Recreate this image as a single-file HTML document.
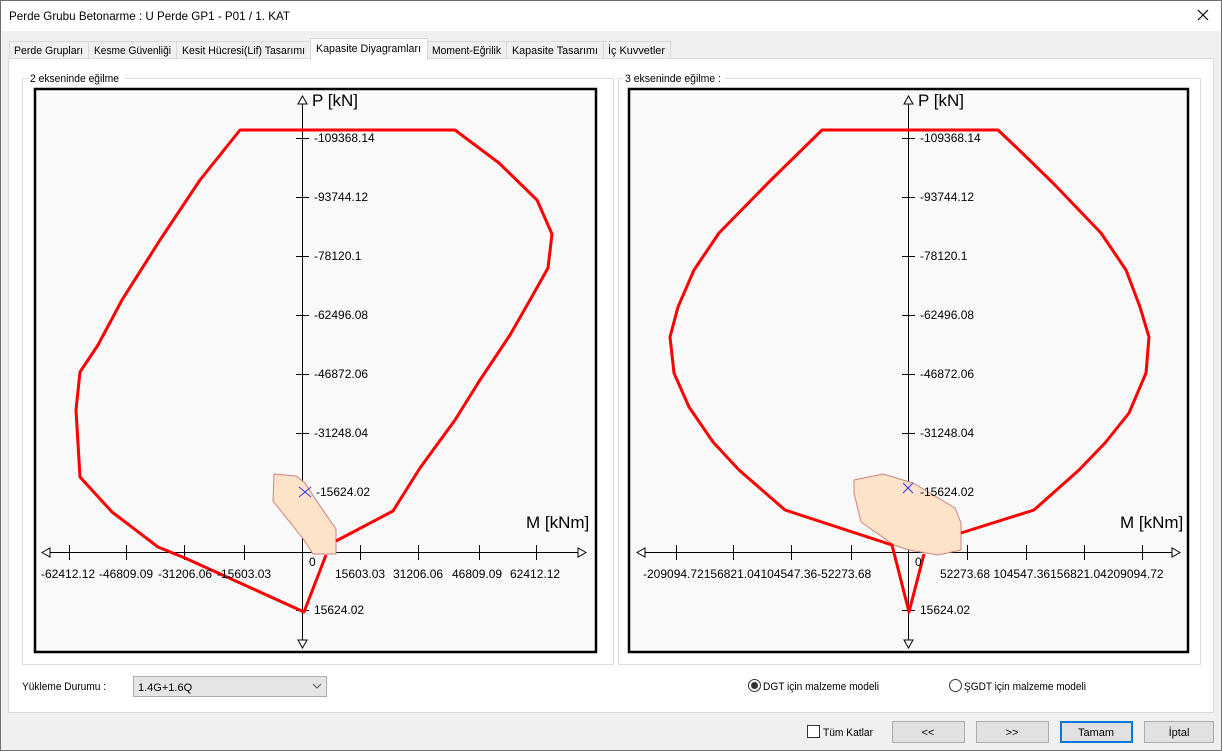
<!DOCTYPE html>
<html><head><meta charset="utf-8"><style>
html,body{margin:0;padding:0;width:1222px;height:751px;overflow:hidden;background:#f0f0f0}
svg{display:block}
text{font-family:"Liberation Sans",sans-serif}
</style></head><body>
<svg width="1222" height="751" viewBox="0 0 1222 751" xmlns="http://www.w3.org/2000/svg">
<rect x="0" y="0" width="1222" height="751" fill="#f0f0f0"/>
<rect x="0" y="0" width="1222" height="31" fill="#fff"/>
<text x="9" y="20" font-size="12" fill="#000" textLength="281" lengthAdjust="spacingAndGlyphs">Perde Grubu Betonarme :  U Perde GP1 - P01 / 1. KAT</text>
<path d="M1198 10 L1208 20 M1208 10 L1198 20" stroke="#000" stroke-width="1.2"/>
<rect x="0.5" y="0.5" width="1221" height="750" fill="none" stroke="#6f6f6f"/>
<!-- tab panel -->
<rect x="8.5" y="58.5" width="1205" height="654" fill="#fff" stroke="#d9d9d9"/>
<g font-size="11" fill="#000" lengthAdjust="spacingAndGlyphs">
<rect x="9.5" y="41.5" width="79" height="17" fill="#f0f0f0" stroke="#d9d9d9"/><text x="14" y="54" textLength="69" lengthAdjust="spacingAndGlyphs">Perde Grupları</text>
<rect x="88.5" y="41.5" width="88" height="17" fill="#f0f0f0" stroke="#d9d9d9"/><text x="94" y="54" textLength="77" lengthAdjust="spacingAndGlyphs">Kesme Güvenliği</text>
<rect x="176.5" y="41.5" width="134" height="17" fill="#f0f0f0" stroke="#d9d9d9"/><text x="182" y="54" textLength="123" lengthAdjust="spacingAndGlyphs">Kesit Hücresi(Lif) Tasarımı</text>
<rect x="310.5" y="38.5" width="117" height="21" fill="#fff" stroke="#d9d9d9"/><rect x="311" y="57" width="116" height="3" fill="#fff"/><text x="316" y="52" textLength="105" lengthAdjust="spacingAndGlyphs">Kapasite Diyagramları</text>
<rect x="427.5" y="41.5" width="79" height="17" fill="#f0f0f0" stroke="#d9d9d9"/><text x="432" y="54" textLength="69" lengthAdjust="spacingAndGlyphs">Moment-Eğrilik</text>
<rect x="506.5" y="41.5" width="97" height="17" fill="#f0f0f0" stroke="#d9d9d9"/><text x="512" y="54" textLength="86" lengthAdjust="spacingAndGlyphs">Kapasite Tasarımı</text>
<rect x="603.5" y="41.5" width="67" height="17" fill="#f0f0f0" stroke="#d9d9d9"/><text x="608" y="54" textLength="57" lengthAdjust="spacingAndGlyphs">İç Kuvvetler</text>
</g>
<!-- group boxes -->
<rect x="22.5" y="78.5" width="591" height="586" fill="none" stroke="#dcdcdc"/>
<rect x="28" y="72" width="96" height="12" fill="#fff"/>
<text x="30" y="82" font-size="11" textLength="89" lengthAdjust="spacingAndGlyphs">2 ekseninde eğilme</text>
<rect x="618.5" y="78.5" width="582" height="586" fill="none" stroke="#dcdcdc"/>
<rect x="623" y="72" width="102" height="12" fill="#fff"/>
<text x="625" y="82" font-size="11" textLength="96" lengthAdjust="spacingAndGlyphs">3 ekseninde eğilme :</text>

<!-- LEFT PLOT -->
<rect x="35" y="89" width="561" height="563" fill="#f9f9f9" stroke="#000" stroke-width="2.5"/>
<g stroke="#000" stroke-width="1" fill="none">
<line x1="302.5" y1="104" x2="302.5" y2="640"/>
<line x1="50" y1="552.5" x2="578" y2="552.5"/>
<path d="M302.5 96 L298 104 L307 104 Z M302.5 648 L298 640 L307 640 Z M42 552.5 L50 548 L50 557 Z M586 552.5 L578 548 L578 557 Z" fill="#fff"/>
<path d="M69.5 545V560M126.5 545V560M184.5 545V560M244.5 545V560M360.5 545V560M418.5 545V560M479.5 545V560M536.5 545V560"/>
<path d="M296 138.5H309M296 197.5H309M296 256.5H309M296 315.5H309M296 374.5H309M296 433.5H309M296 492.5H309M296 610.5H309"/>
</g>
<polygon points="274,474 296,476 305,483 316,500 336,529 336,554 313,554 304,540 273,501" fill="#fde3c8" stroke="#d08080" stroke-width="1"/>
<path d="M299 487 L311 497 M299 497 L311 487" stroke="#3030ff" stroke-width="1"/>
<polyline fill="none" stroke="#f00" stroke-width="3" stroke-linejoin="round" points="336,541 393,511 420,468 455,420 480,380 510,335 530,300 548,268 552,234 537,200 499,163 455,130 240,130 200,180 160,240 122,300 98,345 80,372 76,410 80,477 112,512 158,547 185,558 304,612 326,555"/>
<g font-size="12" fill="#000">
<text x="314" y="142">-109368.14</text><text x="314" y="201">-93744.12</text><text x="314" y="260">-78120.1</text><text x="314" y="319">-62496.08</text><text x="314" y="378">-46872.06</text><text x="314" y="437">-31248.04</text><text x="316" y="496">-15624.02</text><text x="314" y="614">15624.02</text>
<text x="309" y="566">0</text>
<text x="41" y="578">-62412.12</text><text x="99" y="578">-46809.09</text><text x="158" y="578">-31206.06</text><text x="217" y="578">-15603.03</text>
<text x="335" y="578">15603.03</text><text x="393" y="578">31206.06</text><text x="452" y="578">46809.09</text><text x="510" y="578">62412.12</text>
<text x="312" y="106" font-size="17">P [kN]</text>
<text x="526" y="528" font-size="17">M [kNm]</text>
</g>

<!-- RIGHT PLOT -->
<rect x="629" y="89" width="559" height="563" fill="#f9f9f9" stroke="#000" stroke-width="2.5"/>
<g stroke="#000" stroke-width="1" fill="none">
<line x1="908.5" y1="104" x2="908.5" y2="640"/>
<line x1="645" y1="552.5" x2="1172" y2="552.5"/>
<path d="M908.5 96 L904 104 L913 104 Z M908.5 648 L904 640 L913 640 Z M637 552.5 L645 548 L645 557 Z M1180 552.5 L1172 548 L1172 557 Z" fill="#fff"/>
<path d="M676.5 545V560M733.5 545V560M791.5 545V560M851.5 545V560M967.5 545V560M1026.5 545V560M1084.5 545V560M1142.5 545V560"/>
<path d="M902 138.5H915M902 197.5H915M902 256.5H915M902 315.5H915M902 374.5H915M902 433.5H915M902 492.5H915M902 610.5H915"/>
</g>
<polygon points="854,480 883,474 913,483 955,508 961,523 961,550 938,555 909,550 894,545 861,522 854,493" fill="#fde3c8" stroke="#d08080" stroke-width="1"/>
<path d="M903 483 L913 493 M903 493 L913 483" stroke="#3030ff" stroke-width="1"/>
<polyline fill="none" stroke="#f00" stroke-width="3" stroke-linejoin="round" points="961,533 1034,510 1079,470 1105,443 1129,413 1146,373 1149,337 1140,307 1126,270 1101,233 1053,183 1016,147 998,130 822,130 769,182 719,233 694,270 678,307 670,337 674,373 689,407 713,442 739,470 785,510 892,545 909,612 924,554"/>
<g font-size="12" fill="#000">
<text x="920" y="142">-109368.14</text><text x="920" y="201">-93744.12</text><text x="920" y="260">-78120.1</text><text x="920" y="319">-62496.08</text><text x="920" y="378">-46872.06</text><text x="920" y="437">-31248.04</text><text x="920" y="496">-15624.02</text><text x="920" y="614">15624.02</text>
<text x="915" y="566">0</text>
<text x="643" y="578">-209094.72156821.04104547.36-52273.68</text>
<text x="940" y="578">52273.68 104547.36156821.04209094.72</text>
<text x="918" y="106" font-size="17">P [kN]</text>
<text x="1120" y="528" font-size="17">M [kNm]</text>
</g>

<!-- bottom controls -->
<text x="22" y="690" font-size="11" textLength="84" lengthAdjust="spacingAndGlyphs">Yükleme Durumu :</text>
<rect x="133.5" y="676.5" width="193" height="20" fill="#e5e5e5" stroke="#adadad"/>
<text x="138" y="691" font-size="11">1.4G+1.6Q</text>
<path d="M313 684 L317 688 L321 684" stroke="#555" fill="none"/>
<circle cx="754.5" cy="685.5" r="6" fill="#fff" stroke="#333"/><circle cx="754.5" cy="685.5" r="3.5" fill="#333"/>
<text x="763" y="690" font-size="11" textLength="116" lengthAdjust="spacingAndGlyphs">DGT için malzeme modeli</text>
<circle cx="955.5" cy="685.5" r="6" fill="#fff" stroke="#333"/>
<text x="964" y="690" font-size="11" textLength="122" lengthAdjust="spacingAndGlyphs">ŞGDT için malzeme modeli</text>

<rect x="807.5" y="725.5" width="12" height="12" fill="#fff" stroke="#333"/>
<text x="823" y="736" font-size="11" textLength="50" lengthAdjust="spacingAndGlyphs">Tüm Katlar</text>
<rect x="892.5" y="721.5" width="72" height="21" fill="#e1e1e1" stroke="#adadad"/><text x="928" y="736" font-size="11" text-anchor="middle">&lt;&lt;</text>
<rect x="976.5" y="721.5" width="72" height="21" fill="#e1e1e1" stroke="#adadad"/><text x="1012" y="736" font-size="11" text-anchor="middle">&gt;&gt;</text>
<rect x="1061" y="722" width="71" height="20" fill="#e1e1e1" stroke="#0078d7" stroke-width="2"/><text x="1096" y="736" font-size="11" text-anchor="middle">Tamam</text>
<rect x="1144.5" y="721.5" width="69" height="21" fill="#e1e1e1" stroke="#adadad"/><text x="1179" y="736" font-size="11" text-anchor="middle">İptal</text>
</svg>
</body></html>
